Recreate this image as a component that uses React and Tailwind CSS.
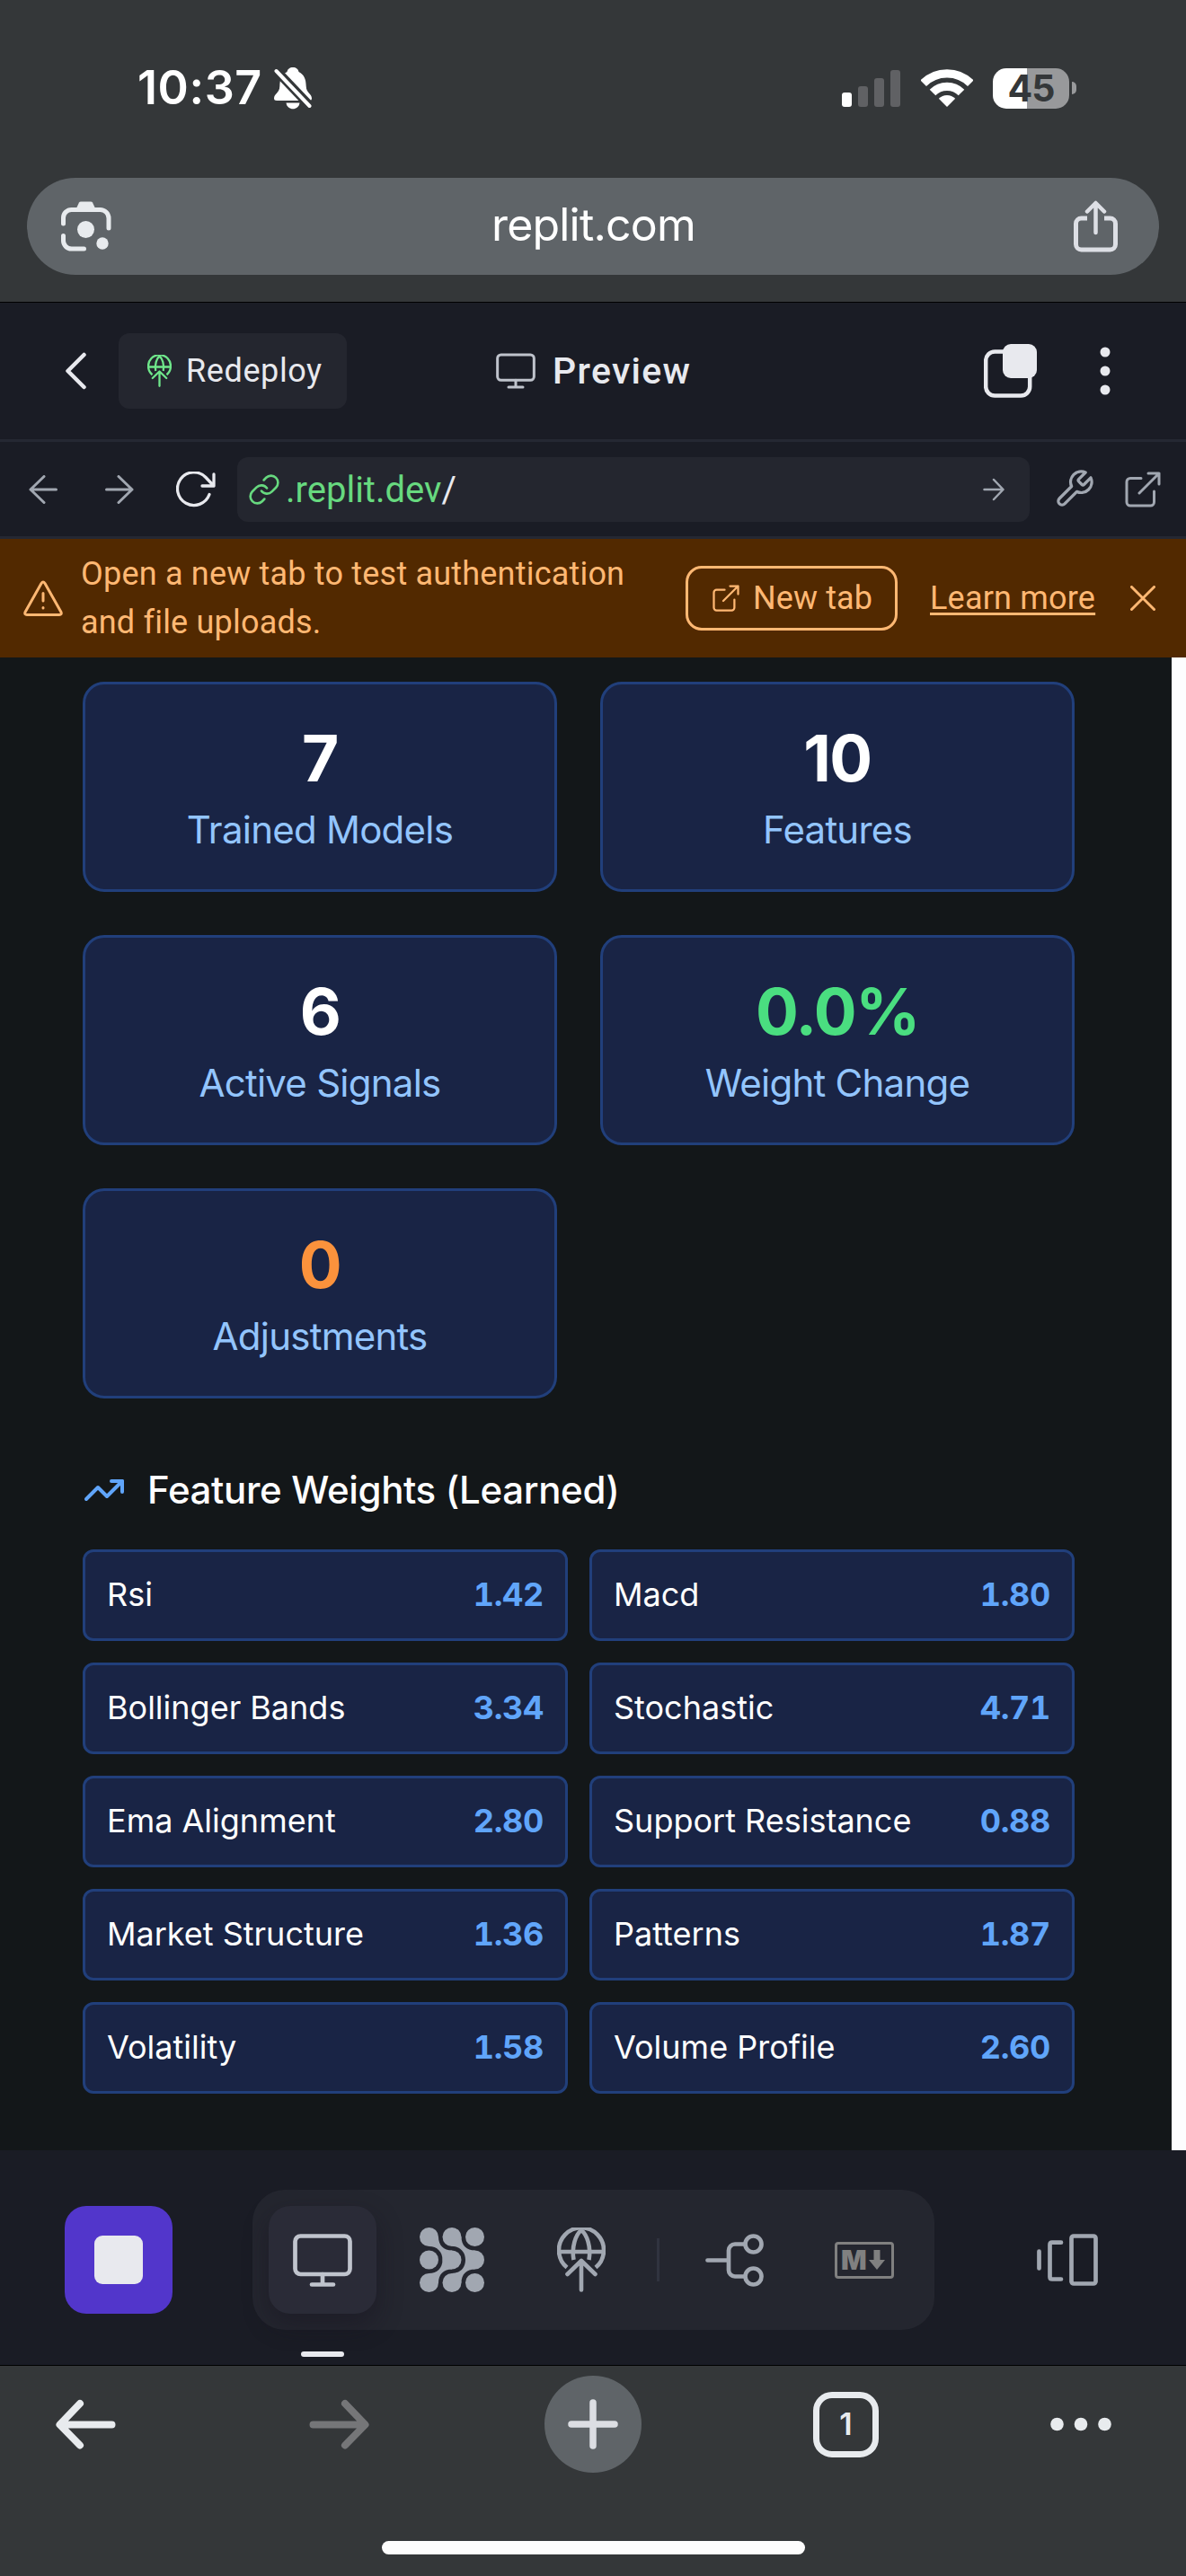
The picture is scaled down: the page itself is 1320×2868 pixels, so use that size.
import React from "react";
import { TrendingUp } from "lucide-react";

const stats = [
  { value: "7", label: "Trained Models", tone: "text-white" },
  { value: "10", label: "Features", tone: "text-white" },
  { value: "6", label: "Active Signals", tone: "text-white" },
  { value: "0.0%", label: "Weight Change", tone: "text-[#4ade80]" },
  { value: "0", label: "Adjustments", tone: "text-[#fb923c]" },
];

const weights = [
  ["Rsi", "1.42"],
  ["Macd", "1.80"],
  ["Bollinger Bands", "3.34"],
  ["Stochastic", "4.71"],
  ["Ema Alignment", "2.80"],
  ["Support Resistance", "0.88"],
  ["Market Structure", "1.36"],
  ["Patterns", "1.87"],
  ["Volatility", "1.58"],
  ["Volume Profile", "2.60"],
];

function Svg({ w, h, sw = 4, box, className = "", children }) {
  return (
    <svg
      width={w}
      height={h}
      viewBox={box || `0 0 ${w} ${h}`}
      fill="none"
      stroke="currentColor"
      strokeWidth={sw}
      strokeLinecap="round"
      strokeLinejoin="round"
      className={`block shrink-0 ${className}`}
    >
      {children}
    </svg>
  );
}

function DeployIcon({ w, h, className }) {
  return (
    <Svg w={w} h={h} sw={4.6} box="0 0 54 72" className={className}>
      <path d="M11 44.5A25 25 0 1 1 43 44.5" strokeLinecap="butt" />
      <path d="M18.5 36C16 22 20.5 8 27 3C33.5 8 38 22 35.5 36" strokeLinecap="butt" />
      <path d="M3 27H51" />
      <path d="M27 69.5V38M11.5 52L27 37L42.5 52" />
    </Svg>
  );
}

function MonitorIcon({ w, h, sw, className }) {
  return (
    <Svg w={w} h={h} sw={sw} box="0 0 66 59" className={className}>
      <rect x="2.5" y="2.5" width="61" height="42.5" rx="6" />
      <path d="M33 45V56.5M21 56.5H45" />
    </Svg>
  );
}

function ExternalIcon({ size, className }) {
  return (
    <Svg w={size} h={size} sw={3} box="0 0 40 40" className={className}>
      <path d="M18 7.5H6A4 4 0 0 0 2 11.5V34A4 4 0 0 0 6 38H28.5A4 4 0 0 0 32.5 34V22" />
      <path d="M26 2H38V14M38 2L16 24" />
    </Svg>
  );
}

function StatusBar() {
  return (
    <div className="flex h-[196px] shrink-0 items-center pl-[153px] font-['Inter',sans-serif] text-white">
      <span className="w-[152px] whitespace-nowrap text-[52px] font-semibold leading-none tracking-[0.6px]">10:37</span>
      <svg width="42" height="47" viewBox="0 0 42 47" className="block shrink-0" fill="#fff">
        <path d="M21 0C17.500 0 15 2 14.500 5C8.500 8 6.500 13 6.300 21C6 29 0 29 0 34.500Q0 37 3 37H39Q42 37 42 34.500C42 29 36 29 35.700 21C35.500 13 33.500 8 27.500 5C27 2 24.500 0 21 0Z" />
        <path d="M13.500 39.500H28.500C27.500 48.500 14.500 48.500 13.500 39.500Z" />
        <path d="M2 3L40 43" stroke="#343739" strokeWidth="10" />
        <path d="M2.500 4L39.500 43" stroke="#fff" strokeWidth="4" strokeLinecap="round" />
      </svg>
      <div className="ml-[590px] flex h-[41px] items-end gap-[7px]">
        <span className="h-[16px] w-[11px] rounded-[3px] bg-white" />
        <span className="h-[23px] w-[11px] rounded-[3px] bg-[#606164]" />
        <span className="h-[32px] w-[11px] rounded-[3px] bg-[#606164]" />
        <span className="h-[41px] w-[11px] rounded-[3px] bg-[#606164]" />
      </div>
      <svg width="58" height="42" viewBox="0 0 58 42" className="ml-[23px] block shrink-0" fill="none" stroke="#fff" strokeWidth="9.300">
        <path d="M2.700 15.700A37.200 37.200 0 0 1 55.300 15.700" />
        <path d="M13 26A22.700 22.700 0 0 1 45 26" />
        <path d="M29 42L19.800 32.800A13 13 0 0 1 38.200 32.800Z" fill="#fff" stroke="none" />
      </svg>
      <div className="ml-[22px] flex h-[45px] w-[85px] items-center justify-center rounded-[15px] bg-[linear-gradient(90deg,#fff_38px,#98999b_38px)] text-[41px] font-bold leading-none tracking-[-1px] text-[#343739]">
        45
      </div>
      <span className="ml-[3px] h-[14px] w-[5px] rounded-r-full bg-[#98999b]" />
    </div>
  );
}

function AddressBar() {
  return (
    <div className="mx-[30px] mt-[2px] flex h-[108px] shrink-0 items-center justify-between rounded-full bg-[#5f6468] pl-[38px] pr-[46px] font-['Inter',sans-serif]">
      <Svg w={56} h={56} sw={5} className="text-[#e8ebee]">
        <path d="M2.500 25V18.500A9 9 0 0 1 11.500 9.500H43.500A9.500 9.500 0 0 1 53 19V30" />
        <path d="M2.500 38.500V44A9 9 0 0 0 11.500 53H25.500" />
        <path d="M16 10L20 1.500Q20.500 0.500 22 0.500H33Q34.500 0.500 35 1.500L39 10Z" fill="currentColor" stroke="none" />
        <circle cx="27.500" cy="31.500" r="9.500" fill="currentColor" stroke="none" />
        <circle cx="46" cy="47" r="6.700" fill="currentColor" stroke="none" />
      </Svg>
      <span className="-mr-[2px] -mt-[4px] whitespace-nowrap text-[50px] leading-none tracking-[-0.8px] text-white">replit.com</span>
      <Svg w={49} h={58} sw={5} className="text-[#dddfe5]">
        <path d="M15 20H8.500A6 6 0 0 0 2.500 26V49A6 6 0 0 0 8.500 55H40.500A6 6 0 0 0 46.500 49V26A6 6 0 0 0 40.500 20H34" strokeLinecap="butt" />
        <path d="M24.500 36V4M15 12.500L24.500 3L34 12.500" strokeWidth="4.500" />
      </Svg>
    </div>
  );
}

function WorkspaceHeader() {
  return (
    <div className="flex h-[155px] shrink-0 items-center border-b-[3px] border-[#252833] pl-[73px] pr-[84px] font-['Roboto',sans-serif] text-[#e8e9ee]">
      <Svg w={23} h={42} sw={4.5}>
        <path d="M20.500 3L2.500 21L20.500 39" />
      </Svg>
      <div className="ml-[36px] flex h-[84px] w-[254px] items-center rounded-[12px] bg-[#24262f] pl-[32px]">
        <DeployIcon w={27} h={36} className="text-[#6fe78b]" />
        <span className="ml-[16px] whitespace-nowrap text-[36px] leading-none tracking-[0.6px]">Redeploy</span>
      </div>
      <MonitorIcon w={44} h={40} sw={4.5} className="ml-[166px] text-[#bfc3cc]" />
      <span className="ml-[19px] whitespace-nowrap text-[41px] font-medium leading-none tracking-[1.3px]">Preview</span>
      <Svg w={59} h={60} sw={4.5} className="ml-auto">
        <rect x="2.200" y="8.500" width="49" height="49" rx="10" />
        <rect x="21" y="0" width="38" height="38" rx="9" fill="currentColor" stroke="none" />
      </Svg>
      <Svg w={12} h={54} className="ml-[70px]">
        <circle cx="6" cy="6" r="5.500" fill="currentColor" stroke="none" />
        <circle cx="6" cy="27" r="5.500" fill="currentColor" stroke="none" />
        <circle cx="6" cy="48" r="5.500" fill="currentColor" stroke="none" />
      </Svg>
    </div>
  );
}

function PreviewToolbar() {
  return (
    <div className="flex h-[108px] shrink-0 items-center border-b-[3px] border-[#252833] pl-[32px] font-['Roboto',sans-serif] text-[#a1a7b1]">
      <Svg w={32} h={32} sw={3}>
        <path d="M30.500 16H2M17 1.500L2 16L17 30.500" />
      </Svg>
      <Svg w={32} h={32} sw={3} className="ml-[53px]">
        <path d="M1.500 16H30M15 1.500L30 16L15 30.500" />
      </Svg>
      <Svg w={44} h={40} sw={3.3} className="ml-[47px] text-[#e8e9ee]">
        <path d="M42 3V16H29M42 16L33 6.500A18.300 18.300 0 1 0 37 25.500" />
      </Svg>
      <div className="ml-[24px] flex h-[72px] w-[882px] items-center rounded-[12px] bg-[#24262f] pl-[13px]">
        <Svg w={34} h={34} sw={1.7} box="1 1 22 22" className="text-[#67d97f]">
          <path d="M10 13a5 5 0 0 0 7.540.540l3-3a5 5 0 0 0-7.070-7.070l-1.720 1.710" />
          <path d="M14 11a5 5 0 0 0-7.540-.540l-3 3a5 5 0 0 0 7.070 7.070l1.710-1.710" />
        </Svg>
        <span className="ml-[7px] mt-[3px] whitespace-nowrap text-[40px] leading-none tracking-[0px] text-[#67d97f]">
          .replit.dev<span className="text-[#e8e9ee]">/</span>
        </span>
        <Svg w={24} h={26} sw={2.500} className="ml-auto mr-[28px]">
          <path d="M1.500 13H22M12 2L22.500 13L12 24" />
        </Svg>
      </div>
      <Svg w={43} h={43} sw={1.700} box="1 1 22 22" className="ml-[28px]">
        <path d="M14.700 6.300a1 1 0 0 0 0 1.400l1.600 1.600a1 1 0 0 0 1.400 0l3.770-3.770a6 6 0 0 1-7.940 7.940l-6.910 6.910a2.120 2.120 0 0 1-3-3l6.910-6.910a6 6 0 0 1 7.940-7.940l-3.760 3.760z" />
      </Svg>
      <ExternalIcon size={40} className="ml-[35px]" />
    </div>
  );
}

function AuthBanner() {
  return (
    <div className="flex h-[132px] shrink-0 items-center bg-[#522900] pl-[26px] font-['Roboto',sans-serif] text-[36px] text-[#ffb873]">
      <Svg w={44} h={40} sw={3}>
        <path d="M20 3.500Q22 0.500 24 3.500L42 35.500Q43 38.500 40 38.500H4Q1 38.500 2 35.500Z" />
        <path d="M22 14.500V23M22 30.500V31" />
      </Svg>
      <p className="ml-[20px] w-[640px] whitespace-nowrap leading-[54px] tracking-[0.2px]">
        Open a new tab to test authentication
        <br />
        and file uploads.
      </p>
      <div className="ml-[33px] flex h-[72px] w-[236px] items-center rounded-[18px] border-[3px] border-[#ffb873] pl-[27px]">
        <ExternalIcon size={30} />
        <span className="ml-[15px] whitespace-nowrap tracking-[0.1px]">New tab</span>
      </div>
      <span className="ml-[36px] w-[184px] whitespace-nowrap tracking-[0.2px] underline decoration-[3px] underline-offset-[4px]">Learn more</span>
      <Svg w={28} h={28} sw={3} className="ml-[39px]">
        <path d="M1.500 1.500L26.500 26.500M26.500 1.500L1.500 26.500" />
      </Svg>
    </div>
  );
}

function StatCard({ value, label, tone }) {
  return (
    <div className="h-[234px] rounded-[24px] border-[3px] border-[#213f7b] bg-[#192445] pt-[34px] text-center">
      <div className={`text-[71px] font-bold leading-[96px] tracking-[-1.4px] ${tone}`}>{value}</div>
      <div className="mt-[2px] text-[42px] leading-[60px] tracking-[-0.75px] text-[#93c5fd]">{label}</div>
    </div>
  );
}

function PreviewContent() {
  return (
    <div className="flex h-[1662px] shrink-0 bg-[#fdfdfe]">
      <div className="w-[1304px] bg-[#131719] pl-[92px] pr-[108px] pt-[27px] font-['Inter',sans-serif]">
        <div className="grid grid-cols-2 gap-[48px]">
          {stats.map((s) => (
            <StatCard key={s.label} {...s} />
          ))}
        </div>
        <div className="mt-[72px] flex h-[60px] items-center gap-[24px]">
          <TrendingUp size={48} strokeWidth={2} className="text-[#60a5fa]" />
          <h2 className="whitespace-nowrap text-[42px] font-medium leading-[60px] tracking-[-0.35px] text-white">Feature Weights (Learned)</h2>
        </div>
        <div className="mt-[36px] grid grid-cols-2 gap-[24px]">
          {weights.map(([name, value]) => (
            <div key={name} className="flex h-[102px] items-center justify-between rounded-[12px] border-[3px] border-[#213f7b] bg-[#192445] px-[24px] pb-[2px] text-[36px] leading-[48px]">
              <span className="whitespace-nowrap text-white">{name}</span>
              <span className="font-bold tabular-nums tracking-[-0.3px] text-[#60a5fa]">{value}</span>
            </div>
          ))}
        </div>
      </div>
    </div>
  );
}

function ToolTile({ children }) {
  return <div className="flex h-[120px] w-[120px] shrink-0 items-center justify-center">{children}</div>;
}

function Dock() {
  return (
    <div className="flex h-[239px] shrink-0 items-start pl-[72px] pt-[44px] text-[#a1a7b1]">
      <div className="mt-[18px] flex h-[120px] w-[120px] items-center justify-center rounded-[24px] bg-[#5236cb]">
        <div className="h-[54px] w-[54px] rounded-[9px] bg-[#e8e9ee]" />
      </div>
      <div className="ml-[89px] flex h-[156px] w-[759px] items-center gap-[24px] rounded-[36px] bg-[#24262f] pl-[18px]">
        <div className="relative flex h-[120px] w-[120px] shrink-0 items-center justify-center rounded-[24px] bg-[#2a2b37] shadow-[0_12px_28px_rgba(20,16,28,0.4)]">
          <MonitorIcon w={66} h={59} sw={4.7} className="text-[#c0c4cd]" />
          <span className="absolute left-[36px] top-[162px] h-[6px] w-[48px] rounded-full bg-[#e8e9ee]" />
        </div>
        <ToolTile>
          <svg width="72" height="72" viewBox="0 0 72 72" fill="currentColor">
            {[10.5, 36, 61.5].map((x) => [10.5, 36, 61.5].map((y) => <circle key={`${x}-${y}`} cx={x} cy={y} r="10.500" />))}
            <path d="M10.500 21C19.500 21 25.500 27 25.500 36C25.500 45 19.500 51 10.500 51L21 61.500C21 52 27 46.500 36 46.500V25.500C27 25.500 21 20 21 10.500Z" />
            <path d="M36 21C45 21 51 27 51 36C51 45 45 51 36 51L46.500 61.500C46.500 52 52.500 46.500 61.500 46.500V25.500C52.500 25.500 46.500 20 46.500 10.500Z" />
          </svg>
        </ToolTile>
        <ToolTile>
          <DeployIcon w={54} h={72} />
        </ToolTile>
        <span className="h-[48px] w-[3px] shrink-0 bg-[#30333f]" />
        <ToolTile>
          <Svg w={66} h={59} sw={4.7}>
            <path d="M2.500 29.500H26M43 11.500H33A7 7 0 0 0 26 18.500V40.500A7 7 0 0 0 33 47.500H43" />
            <circle cx="53.500" cy="11.500" r="9" />
            <circle cx="53.500" cy="47.500" r="9" />
          </Svg>
        </ToolTile>
        <ToolTile>
          <div className="flex h-[41px] w-[66px] items-center rounded-[4px] border-[3px] border-[#808080] pl-[4px] font-['Inter',sans-serif] text-[30px] font-black leading-none text-[#808080]">
            <span className="w-[29px]">M</span>
            <svg width="18" height="22" viewBox="0 0 18 22" fill="currentColor" className="ml-[2px] block shrink-0">
              <path d="M5.500 0H12.500V11H18L9 22L0 11H5.500Z" />
            </svg>
          </div>
        </ToolTile>
      </div>
      <Svg w={68} h={58} sw={4.7} className="ml-[114px] mt-[49px]">
        <path d="M2.500 19.500V38.500M27 9.700H17Q14.500 9.700 14.500 12.200V48Q14.500 50.500 17 50.500H27" />
        <rect x="38.500" y="2.500" width="27" height="53" rx="2.500" />
      </Svg>
    </div>
  );
}

function BrowserBar() {
  return (
    <div className="flex h-[234px] shrink-0 flex-col items-center pt-[11px] text-[#e8ebee]">
      <div className="flex h-[108px] w-full items-center pl-[62px]">
        <Svg w={67} h={56} sw={8}>
          <path d="M62.500 28.500H5M27 5L4.500 28.500L27 51.500" />
        </Svg>
        <Svg w={67} h={56} sw={8} className="ml-[215px] text-[#757678]">
          <path d="M4.500 28.500H62M40 5L62.500 28.500L40 51.500" />
        </Svg>
        <div className="ml-[195px] flex h-[108px] w-[108px] items-center justify-center rounded-full bg-[#5f6468] text-[#dcdee3]">
          <Svg w={56} h={56} sw={7.5}>
            <path d="M28 4V52M4 28H52" />
          </Svg>
        </div>
        <div className="ml-[191px] flex h-[73px] w-[73px] items-center justify-center rounded-[21px] border-[7px] border-[#e8ebee] font-['Inter',sans-serif] text-[34px] font-semibold leading-none">
          1
        </div>
        <Svg w={68} h={16} className="ml-[191px]">
          <circle cx="7.500" cy="8" r="7.300" fill="currentColor" stroke="none" />
          <circle cx="34" cy="8" r="7.300" fill="currentColor" stroke="none" />
          <circle cx="60.500" cy="8" r="7.300" fill="currentColor" stroke="none" />
        </Svg>
      </div>
      <span className="mt-[76px] h-[15px] w-[471px] rounded-full bg-[#fdfdfd]" />
    </div>
  );
}

export default function App() {
  return (
    <div className="flex h-[2868px] w-[1320px] flex-col overflow-hidden bg-[#343739]">
      <StatusBar />
      <AddressBar />
      <div className="mt-[30px] shrink-0 border-y border-black bg-[#1a1c25]">
        <WorkspaceHeader />
        <PreviewToolbar />
        <AuthBanner />
        <PreviewContent />
        <Dock />
      </div>
      <BrowserBar />
    </div>
  );
}
